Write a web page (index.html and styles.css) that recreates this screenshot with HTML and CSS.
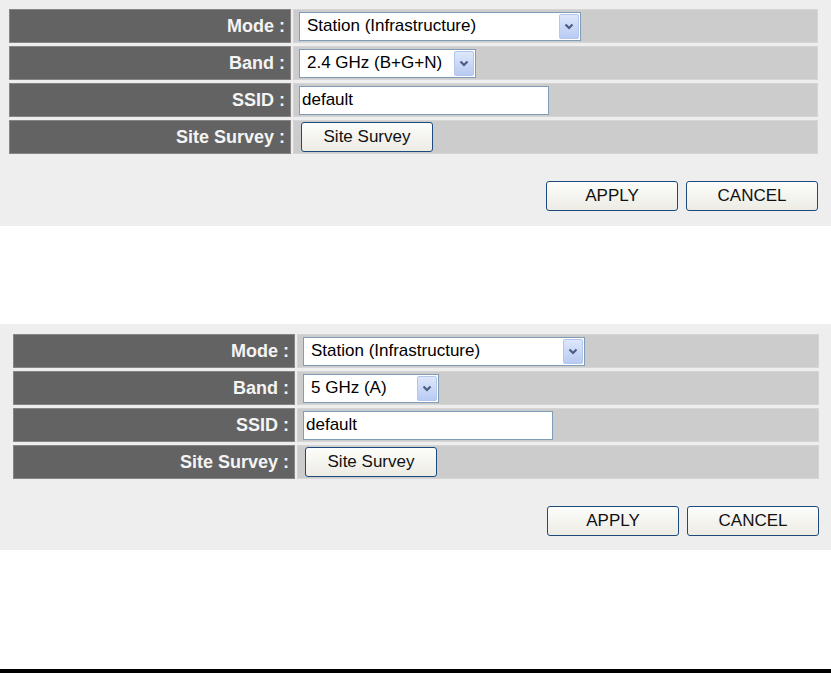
FILE: index.html
```html
<!DOCTYPE html>
<html lang="en">
  <head>
    <meta charset="UTF-8" />
    <title>Wireless Settings</title>
    <link rel="stylesheet" href="styles.css">
  </head>

  <body>
    <!-- 2.4 GHz panel -->
    <div class="panel panel-first">
      <div class="form-grid">
        <div class="label">Mode :</div>
        <div class="value">
          <div class="select select-mode">
            <span class="select-text">Station (Infrastructure)</span>
            <span class="arrow">
              <svg width="10" height="7" viewBox="0 0 10 7"><polyline points="1.5,1.5 5,5 8.5,1.5" fill="none" stroke="#4a5d86" stroke-width="2.2" /></svg>
            </span>
          </div>
        </div>

        <div class="label">Band :</div>
        <div class="value">
          <div class="select select-band-wide">
            <span class="select-text">2.4 GHz (B+G+N)</span>
            <span class="arrow">
              <svg width="10" height="7" viewBox="0 0 10 7"><polyline points="1.5,1.5 5,5 8.5,1.5" fill="none" stroke="#4a5d86" stroke-width="2.2" /></svg>
            </span>
          </div>
        </div>

        <div class="label">SSID :</div>
        <div class="value">
          <input class="text-input" type="text" value="default" />
        </div>

        <div class="label">Site Survey :</div>
        <div class="value">
          <button class="btn btn-survey" type="button">Site Survey</button>
        </div>
      </div>

      <div class="actions">
        <button class="btn" type="button">APPLY</button>
        <button class="btn" type="button">CANCEL</button>
      </div>
    </div>

    <!-- 5 GHz panel -->
    <div class="panel panel-second">
      <div class="form-grid">
        <div class="label">Mode :</div>
        <div class="value">
          <div class="select select-mode">
            <span class="select-text">Station (Infrastructure)</span>
            <span class="arrow">
              <svg width="10" height="7" viewBox="0 0 10 7"><polyline points="1.5,1.5 5,5 8.5,1.5" fill="none" stroke="#4a5d86" stroke-width="2.2" /></svg>
            </span>
          </div>
        </div>

        <div class="label">Band :</div>
        <div class="value">
          <div class="select select-band-short">
            <span class="select-text">5 GHz (A)</span>
            <span class="arrow">
              <svg width="10" height="7" viewBox="0 0 10 7"><polyline points="1.5,1.5 5,5 8.5,1.5" fill="none" stroke="#4a5d86" stroke-width="2.2" /></svg>
            </span>
          </div>
        </div>

        <div class="label">SSID :</div>
        <div class="value">
          <input class="text-input" type="text" value="default" />
        </div>

        <div class="label">Site Survey :</div>
        <div class="value">
          <button class="btn btn-survey" type="button">Site Survey</button>
        </div>
      </div>

      <div class="actions">
        <button class="btn" type="button">APPLY</button>
        <button class="btn" type="button">CANCEL</button>
      </div>
    </div>

    <div class="page-edge"></div>
  </body>
</html>
```

FILE: styles.css
```css
body {
  margin: 0;
  background-color: #ffffff;
  font-family: "Liberation Sans", Arial, sans-serif;
}

.panel {
  box-sizing: border-box;
  height: 226px;
  background-color: #eeeeee;
}

.panel-first {
  padding: 9px 13px 0 9px;
}

.panel-second {
  margin-top: 98px;
  padding: 10px 12px 0 13px;
}

.form-grid {
  display: grid;
  grid-template-columns: 282px 1fr;
  grid-auto-rows: 34px;
  column-gap: 2px;
  row-gap: 3px;
}

/* Left column: dark label cells */
.label {
  box-sizing: border-box;
  display: flex;
  align-items: center;
  justify-content: flex-end;
  padding-right: 5px;
  background-color: #636363;
  border: 1px solid #858585;
  color: #f4f4f4;
  font-size: 18px;
  font-weight: bold;
}

/* Right column: grey value cells */
.value {
  box-sizing: border-box;
  display: flex;
  align-items: center;
  padding-left: 5px;
  background-color: #cccccc;
  border: 1px solid #d5d5d5;
}

/* Drop-down boxes */
.select {
  box-sizing: border-box;
  display: flex;
  align-items: center;
  height: 29px;
  padding: 1px 1px 1px 7px;
  background-color: #ffffff;
  border: 1px solid #7f9db9;
  font-size: 17px;
  color: #000000;
}

.select-text {
  flex: 1;
  white-space: nowrap;
}

.select-mode {
  width: 282px;
}

.select-band-wide {
  width: 177px;
}

.select-band-short {
  width: 136px;
}

.arrow {
  box-sizing: border-box;
  display: flex;
  align-items: center;
  justify-content: center;
  width: 20px;
  height: 25px;
  margin-left: 4px;
  background: linear-gradient(#dde7fb, #b8cbf3);
  border: 1px solid #b4c6ec;
  border-radius: 2px;
}

/* SSID field */
.text-input {
  box-sizing: border-box;
  width: 250px;
  height: 29px;
  padding: 0 2px;
  border: 1px solid #7f9db9;
  background-color: #ffffff;
  font-family: "Liberation Sans", Arial, sans-serif;
  font-size: 17px;
  color: #000000;
}

/* XP style buttons */
.btn {
  box-sizing: border-box;
  width: 132px;
  height: 30px;
  padding: 0;
  background: linear-gradient(#fdfdfb, #ecebe4);
  border: 1px solid #1c4a7c;
  border-radius: 3px;
  font-family: "Liberation Sans", Arial, sans-serif;
  font-size: 17px;
  color: #111111;
}

.btn-survey {
  margin-left: 2px;
}

.actions {
  display: flex;
  justify-content: flex-end;
  gap: 8px;
  margin-top: 27px;
}

.page-edge {
  height: 4px;
  margin-top: 119px;
  background-color: #000000;
}
```
